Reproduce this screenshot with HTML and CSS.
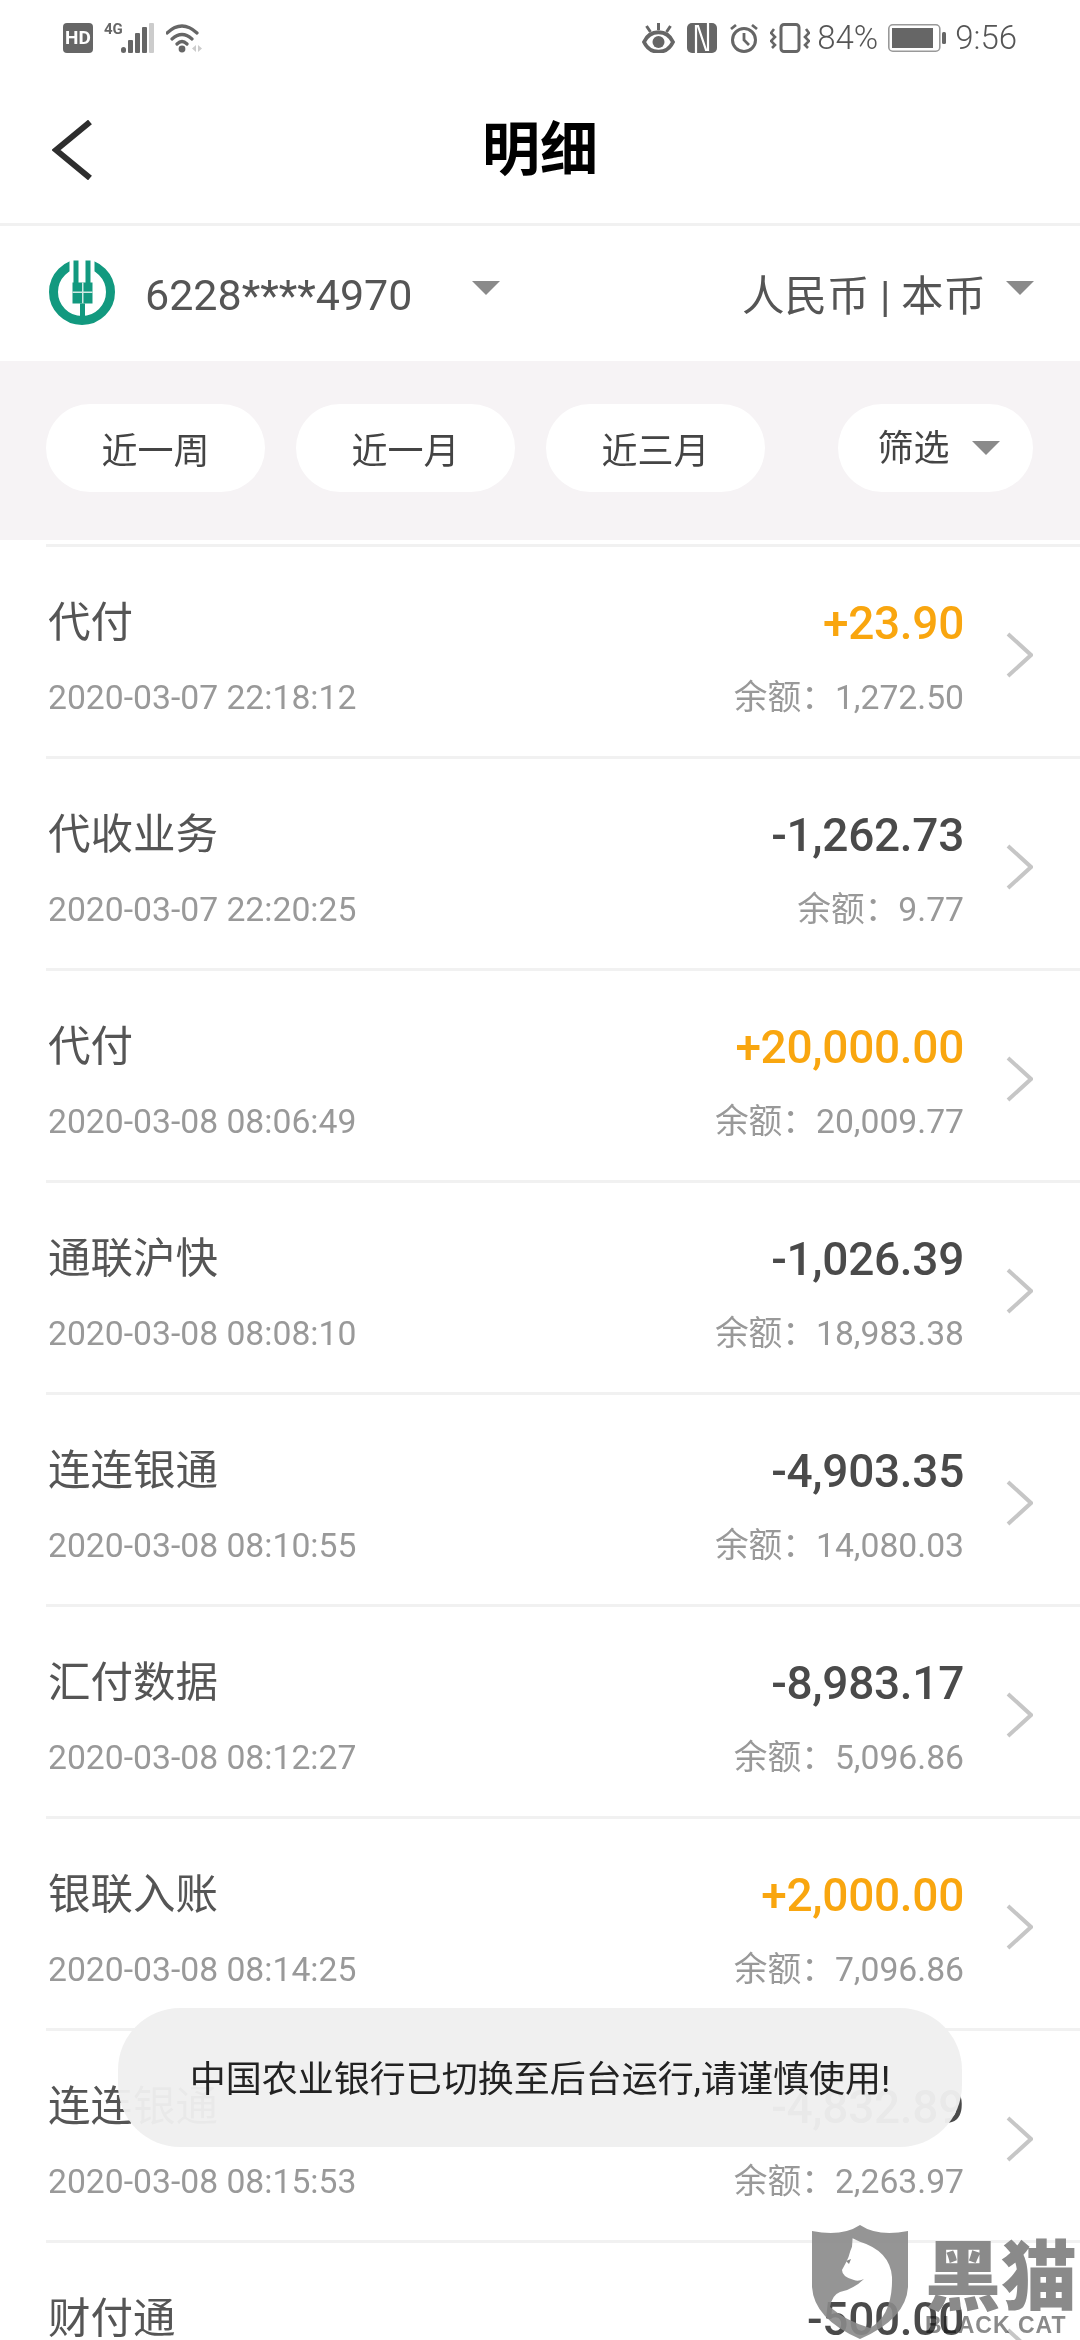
FILE: index.html
```html
<!DOCTYPE html>
<html lang="zh-CN">
<head>
  <meta charset="UTF-8">
  <meta name="viewport" content="width=device-width, initial-scale=1.0">
  <title>明细</title>
  <link rel="stylesheet" href="styles.css">
</head>
<body>
  <div class="phone">
    <div class="status-bar">
      <div class="status-left">
        <span class="hd">HD</span>
        <svg class="signal" width="52" height="30" viewBox="0 0 52 30">
          <text class="net" x="0" y="11">4G</text>
          <rect x="17" y="24" width="5" height="6" rx="2.5" fill="#666"/>
          <rect x="24" y="17" width="5" height="13" rx="1" fill="#666"/>
          <rect x="31" y="10" width="5" height="20" rx="1" fill="#666"/>
          <rect x="38" y="4" width="5" height="26" rx="1" fill="#666"/>
          <rect x="45" y="0" width="5" height="30" rx="1" fill="#ccc"/>
        </svg>
        <svg class="wifi" width="37" height="30" viewBox="0 0 37 30">
          <path d="M1 10Q16 -4 31 10M6 16Q16 7 26 16M11 21Q16 16 21 21" fill="none" stroke="#666" stroke-width="3.2" stroke-linecap="round"/>
          <circle cx="16" cy="26" r="3.4" fill="#666"/>
          <path d="M30 22v7l-4 -3.500zM32 22v7l4 -3.500z" fill="#ccc"/>
        </svg>
      </div>
      <div class="status-right">
        <svg class="st-eye" width="33" height="30" viewBox="0 0 33 30">
          <path d="M2 19C8 6 25 6 31 19C25 32 8 32 2 19Z" fill="none" stroke="#666" stroke-width="3.800"/>
          <circle cx="16.500" cy="19" r="6" fill="#666"/>
          <path d="M16.500 0V7M4.500 3L8.500 9M28.500 3L24.500 9" fill="none" stroke="#666" stroke-width="3"/>
        </svg>
        <svg class="st-nfc" width="30" height="30" viewBox="0 0 30 30">
          <rect width="30" height="30" rx="5" fill="#666"/>
          <path d="M9 30V3H11L19 27H21V0" fill="none" stroke="#fff" stroke-width="2.200"/>
        </svg>
        <svg class="st-alarm" width="30" height="30" viewBox="0 0 30 30">
          <circle cx="15" cy="17" r="11.500" fill="none" stroke="#666" stroke-width="3"/>
          <path d="M15 10V17L20 22M2 6L7 2M28 6L23 2" fill="none" stroke="#666" stroke-width="2.800"/>
        </svg>
        <svg class="st-vib" width="40" height="30" viewBox="0 0 40 30">
          <rect x="11" y="1.500" width="18" height="27" rx="3" fill="none" stroke="#666" stroke-width="3"/>
          <path d="M4 6L1 10L5 14L1 18L5 22L2 25M36 6L39 10L35 14L39 18L35 22L38 25" fill="none" stroke="#666" stroke-width="2.600"/>
        </svg>
        <span class="st-text st-batt">84%</span>
        <svg class="st-battery" width="58" height="28" viewBox="0 0 58 28">
          <rect x="0.800" y="0.800" width="51" height="26.400" rx="4" fill="none" stroke="#999" stroke-width="1.600"/>
          <rect x="4" y="4" width="41" height="20" fill="#666"/>
          <rect x="54" y="8" width="4" height="12" rx="1.500" fill="#666"/>
        </svg>
        <span class="st-text">9:56</span>
      </div>
    </div>

    <div class="nav-bar">
      <svg class="back" width="40" height="60" viewBox="0 0 40 60">
        <path d="M38 2L4 30L38 58" fill="none" stroke="#2e2e2e" stroke-width="6"/>
      </svg>
      <h1 class="nav-title">明细</h1>
    </div>

    <div class="account-row">
      <svg class="bank-logo" width="66" height="67" viewBox="9.500 8.500 66 67">
        <circle cx="42.500" cy="41.500" r="28.500" fill="none" stroke="#12997f" stroke-width="9"/>
        <rect x="30" y="8" width="25" height="26" fill="#fff"/>
        <rect x="34" y="10" width="5" height="24" fill="#12997f"/>
        <rect x="46" y="10" width="5" height="24" fill="#12997f"/>
        <rect x="33" y="32" width="20" height="21" fill="#12997f"/>
        <rect x="33" y="41" width="20" height="1.500" fill="#cfe9e3"/>
        <rect x="42.500" y="32" width="1.500" height="21" fill="#cfe9e3"/>
        <rect x="40.500" y="53" width="5" height="18" fill="#12997f"/>
      </svg>
      <span class="card-no">6228****4970</span>
      <span class="caret card-caret"></span>
      <span class="currency">人民币 | 本币</span>
      <span class="caret"></span>
    </div>

    <div class="filter-bar">
      <span class="pill">近一周</span>
      <span class="pill">近一月</span>
      <span class="pill">近三月</span>
      <span class="pill pill-filter">筛选<span class="caret"></span></span>
    </div>

    <div class="list">
      <div class="row">
        <div class="row-main"><p class="row-title">代付</p><p class="row-sub">2020-03-07 22:18:12</p></div>
        <div class="row-side"><p class="amount in">+23.90</p><p class="row-sub">余额：1,272.50</p></div>
        <svg class="chev" width="27" height="46" viewBox="0 0 27 46"><path d="M2 2L25 23L2 44"/></svg>
      </div>
      <div class="row">
        <div class="row-main"><p class="row-title">代收业务</p><p class="row-sub">2020-03-07 22:20:25</p></div>
        <div class="row-side"><p class="amount">-1,262.73</p><p class="row-sub">余额：9.77</p></div>
        <svg class="chev" width="27" height="46" viewBox="0 0 27 46"><path d="M2 2L25 23L2 44"/></svg>
      </div>
      <div class="row">
        <div class="row-main"><p class="row-title">代付</p><p class="row-sub">2020-03-08 08:06:49</p></div>
        <div class="row-side"><p class="amount in">+20,000.00</p><p class="row-sub">余额：20,009.77</p></div>
        <svg class="chev" width="27" height="46" viewBox="0 0 27 46"><path d="M2 2L25 23L2 44"/></svg>
      </div>
      <div class="row">
        <div class="row-main"><p class="row-title">通联沪快</p><p class="row-sub">2020-03-08 08:08:10</p></div>
        <div class="row-side"><p class="amount">-1,026.39</p><p class="row-sub">余额：18,983.38</p></div>
        <svg class="chev" width="27" height="46" viewBox="0 0 27 46"><path d="M2 2L25 23L2 44"/></svg>
      </div>
      <div class="row">
        <div class="row-main"><p class="row-title">连连银通</p><p class="row-sub">2020-03-08 08:10:55</p></div>
        <div class="row-side"><p class="amount">-4,903.35</p><p class="row-sub">余额：14,080.03</p></div>
        <svg class="chev" width="27" height="46" viewBox="0 0 27 46"><path d="M2 2L25 23L2 44"/></svg>
      </div>
      <div class="row">
        <div class="row-main"><p class="row-title">汇付数据</p><p class="row-sub">2020-03-08 08:12:27</p></div>
        <div class="row-side"><p class="amount">-8,983.17</p><p class="row-sub">余额：5,096.86</p></div>
        <svg class="chev" width="27" height="46" viewBox="0 0 27 46"><path d="M2 2L25 23L2 44"/></svg>
      </div>
      <div class="row">
        <div class="row-main"><p class="row-title">银联入账</p><p class="row-sub">2020-03-08 08:14:25</p></div>
        <div class="row-side"><p class="amount in">+2,000.00</p><p class="row-sub">余额：7,096.86</p></div>
        <svg class="chev" width="27" height="46" viewBox="0 0 27 46"><path d="M2 2L25 23L2 44"/></svg>
      </div>
      <div class="row">
        <div class="row-main"><p class="row-title">连连银通</p><p class="row-sub">2020-03-08 08:15:53</p></div>
        <div class="row-side"><p class="amount">-4,832.89</p><p class="row-sub">余额：2,263.97</p></div>
        <svg class="chev" width="27" height="46" viewBox="0 0 27 46"><path d="M2 2L25 23L2 44"/></svg>
      </div>
      <div class="row">
        <div class="row-main"><p class="row-title">财付通</p></div>
        <div class="row-side"><p class="amount">-500.00</p></div>
        <svg class="chev" width="27" height="46" viewBox="0 0 27 46"><path d="M2 2L25 23L2 44"/></svg>
      </div>
    </div>

    <div class="toast">中国农业银行已切换至后台运行,请谨慎使用!</div>

    <div class="watermark">
      <svg class="wm-shield" width="96" height="114" viewBox="0 0 96 114">
        <path fill-rule="evenodd" d="M0 6Q30 12 48 0Q66 12 96 6V62Q94 94 48 114Q2 94 0 62ZM40.600 13.300L48 16.700Q78 26 80 52Q81 90 58 103Q34 96 18 82Q20 70 28 67Q42 64 52 54Q46 57 42 55Q30 52 30 45Q34 38 36.600 31.700Q38 26 40 21.700Z" fill="#8a8a8a" fill-opacity="0.9"/>
        <path d="M34 36L39 34L37 39Z" fill="#888"/>
      </svg>
      <div class="wm-text">
        <span class="wm-cn">黑猫</span>
        <span class="wm-en">BLACK CAT</span>
      </div>
    </div>
  </div>
</body>
</html>
```

FILE: styles.css
```css
* {
  box-sizing: border-box;
}
html, body {
  margin: 0;
  padding: 0;
  background: #fff;
}
p, h1 {
  margin: 0;
}
.phone {
  position: relative;
  width: 1080px;
  height: 2340px;
  overflow: hidden;
  background: #fff;
  font-family: Roboto, "Noto Sans CJK SC", sans-serif;
  color: #555;
}

/* status bar */
.status-bar {
  display: flex;
  justify-content: space-between;
  height: 60px;
  padding: 23px 63px 0;
}
.status-left, .status-right {
  display: flex;
  align-items: flex-start;
}
.status-left {
  gap: 10px;
}
.hd {
  width: 30px;
  height: 30px;
  border-radius: 4px;
  background: #666;
  color: #fff;
  font-size: 19px;
  font-weight: 700;
  line-height: 30px;
  text-align: center;
}
.net {
  font-family: Roboto, sans-serif;
  font-size: 15px;
  font-weight: 700;
  fill: #666;
}
.signal {
  margin-left: 1px;
}
.st-nfc {
  margin-left: 12px;
}
.st-alarm {
  margin-left: 12px;
}
.st-vib {
  margin-left: 11px;
}
.st-text {
  font-size: 33px;
  font-weight: 300;
  line-height: 30px;
  color: #555;
}
.st-batt {
  margin-left: 7px;
}
.st-battery {
  margin: 1px 9px 0 10px;
}

/* title */
.nav-bar {
  display: flex;
  align-items: center;
  justify-content: center;
  position: relative;
  height: 166px;
  border-bottom: 3px solid #f1f1f1;
}
.nav-title {
  font-size: 58px;
  font-weight: 700;
  color: #000;
  margin-top: 7px;
}
.back {
  position: absolute;
  left: 52px;
  top: 60px;
}

/* account */
.account-row {
  display: flex;
  align-items: center;
  height: 135px;
  padding: 0 46px 2px 49px;
}
.card-no {
  margin: 4px 0 0 30px;
  font-size: 43px;
  color: #555;
}
.currency {
  margin-left: auto;
  font-size: 42.500px;
  margin-right: 20px;
}
.caret {
  width: 0;
  height: 0;
  border-left: 14px solid transparent;
  border-right: 14px solid transparent;
  border-top: 14px solid #8a8a8a;
  margin-bottom: 10px;
}
.card-caret {
  margin-left: 60px;
}

/* quick filters */
.filter-bar {
  display: flex;
  gap: 31px;
  height: 179px;
  padding: 43px 47px 0 46px;
  margin-bottom: 4px;
  background: #f6f3f5;
}
.pill {
  display: flex;
  align-items: center;
  justify-content: center;
  width: 219px;
  height: 88px;
  border-radius: 44px;
  background: #fff;
  font-size: 36px;
  color: #444;
}
.pill-filter {
  width: 195px;
  margin-left: auto;
  gap: 22px;
  padding: 0 0 6px 6px;
}
.pill-filter .caret {
  margin-bottom: -6px;
}

/* transactions */
.list {
  padding-left: 46px;
}
.row {
  display: flex;
  height: 212px;
  padding-top: 52px;
  padding-right: 47px;
  border-top: 3px solid #f1f1f1;
}
.row-main {
  flex: 1;
}
.row-title {
  font-size: 42.500px;
  line-height: 48px;
  color: #555;
  padding-left: 2px;
}
.row-sub {
  margin-top: 31px;
  font-size: 33.700px;
  line-height: 40px;
  color: #999;
  padding-left: 2px;
}
.row-side {
  text-align: right;
}
.amount {
  font-size: 46px;
  font-weight: 500;
  letter-spacing: -0.300px;
  line-height: 48px;
  color: #4a4a4a;
}
.amount.in {
  color: #f9a60f;
}
.chev {
  margin: 33px 0 0 42px;
}
.chev path {
  fill: none;
  stroke: #c6c6c6;
  stroke-width: 4;
}

/* overlays */
.toast {
  position: absolute;
  left: 118px;
  top: 2008px;
  width: 844px;
  height: 139px;
  border-radius: 62px;
  background: rgba(239, 239, 239, 0.96);
  color: #222;
  font-size: 36px;
  line-height: 145px;
  text-align: center;
}
.watermark {
  position: absolute;
  left: 812px;
  top: 2225px;
  display: flex;
  gap: 17px;
}
.wm-text {
  display: flex;
  flex-direction: column;
  align-items: flex-start;
}
.wm-cn {
  margin-top: 2px;
  font-family: "Noto Sans CJK SC", sans-serif;
  font-size: 76px;
  font-weight: 900;
  line-height: 88px;
  color: #8a8a8a;
}
.wm-en {
  font-family: "Liberation Sans", sans-serif;
  font-size: 23px;
  font-weight: 700;
  letter-spacing: 1px;
  line-height: 20px;
  color: #8a8a8a;
  mix-blend-mode: multiply;
}
```
